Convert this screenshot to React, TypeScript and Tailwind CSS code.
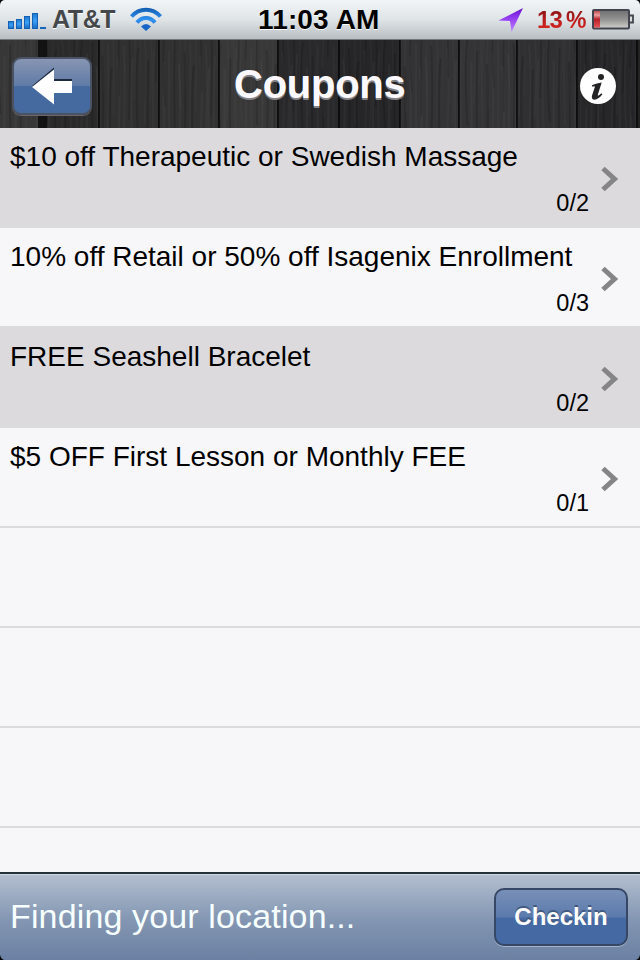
import React from "react";

const coupons = [
  { title: "$10 off Therapeutic or Swedish Massage", count: "0/2" },
  { title: "10% off Retail or 50% off Isagenix Enrollment", count: "0/3" },
  { title: "FREE Seashell Bracelet", count: "0/2" },
  { title: "$5 OFF First Lesson or Monthly FEE", count: "0/1" },
];

const planks = [
  { x: 0, w: 38, c: "#373737" },
  { x: 38, w: 61, c: "#2a2a2b" },
  { x: 99, w: 60, c: "#303031" },
  { x: 159, w: 60, c: "#313131" },
  { x: 219, w: 59, c: "#393839" },
  { x: 278, w: 61, c: "#29282a" },
  { x: 339, w: 61, c: "#262527" },
  { x: 400, w: 59, c: "#333234" },
  { x: 459, w: 58, c: "#343335" },
  { x: 517, w: 60, c: "#302f31" },
  { x: 577, w: 60, c: "#272628" },
  { x: 637, w: 3, c: "#222" },
];

function Wood() {
  const grain = Array.from({ length: 210 }, (_, i) => {
    const r = ((i * 7919 + 137) % 101) / 101;
    const x = i * 3.05 + r * 2;
    const y = r * 60 - 30;
    const bend = ((i * 31) % 9) - 4;
    return (
      <path
        key={i}
        d={`M${x} ${y} q${bend} 30 0 ${65 + r * 50}`}
        stroke={i % 3 === 0 ? "#000" : "#8b898b"}
        strokeOpacity={i % 3 === 0 ? 0.14 : 0.04 + r * 0.04}
        strokeWidth={1.4 + r}
        fill="none"
      />
    );
  });
  return (
    <svg className="absolute inset-0" width="640" height="88" viewBox="0 0 640 88">
      {planks.map((p) => (
        <rect key={p.x} x={p.x} width={p.w} height="88" fill={p.c} />
      ))}
      {grain}
      <rect x="38" width="9" height="88" fill="#0b0b0b" opacity=".75" />
      {planks.slice(2).map((p) => (
        <rect key={p.x} x={p.x - 1} width="1.8" height="88" fill="#080808" opacity=".85" />
      ))}
    </svg>
  );
}

function StatusBar() {
  return (
    <div className="relative h-10 shrink-0 bg-black">
      <div className="relative flex h-10 items-center rounded-t-[5px] border-b border-[#70787d] bg-linear-to-b from-[#f1f5f7] via-[#dfe4e7] to-[#b8bec2]">
        <svg className="ml-[7px] shrink-0" width="40" height="40" viewBox="7 0 40 40">
          <defs>
            <linearGradient id="sig" x1="0" y1="0" x2="0" y2="1">
              <stop offset="0" stopColor="#1b78d0" />
              <stop offset=".5" stopColor="#3ba0f5" />
              <stop offset="1" stopColor="#1769c4" />
            </linearGradient>
          </defs>
          <g fill="url(#sig)" stroke="#1461b3" strokeWidth="1">
            <rect x="8.5" y="21.500" width="5" height="7" />
            <rect x="16.500" y="19.500" width="5" height="9" />
            <rect x="24.500" y="16.500" width="5" height="12" />
            <rect x="32.500" y="13.500" width="5" height="15" />
          </g>
          <rect x="40" y="27" width="6" height="2" fill="#1668b9" />
        </svg>
        <span className="ml-[5px] w-[66px] text-[25px] leading-none font-bold tracking-[-0.4px] text-[#45484a] [text-shadow:0_1px_0_#fff]">
          AT&amp;T
        </span>
        <svg className="ml-[11px] shrink-0" width="34" height="40" viewBox="129 0 34 40">
          <defs>
            <linearGradient id="wf" x1="0" y1="8" x2="0" y2="31" gradientUnits="userSpaceOnUse">
              <stop offset="0" stopColor="#125cae" />
              <stop offset=".5" stopColor="#2f92f2" />
              <stop offset="1" stopColor="#1260c0" />
            </linearGradient>
          </defs>
          <g stroke="url(#wf)" fill="none" strokeWidth="4">
            <path d="M131.500 16.500 C139.500 7.500 152.500 7.500 160.500 16.500" />
            <path d="M137 22.500 C142 16.500 150 16.500 155 22.500" />
          </g>
          <path d="M146 31 L141 26.500 Q146 21.500 151 26.500Z" fill="#1765c6" />
        </svg>
        <span className="absolute left-[258px] top-[7px] whitespace-nowrap text-[28px] leading-[26px] font-bold tracking-[0.15px] text-black [text-shadow:0_1px_0_#fff]">
          11:03 AM
        </span>
        <div className="ml-auto flex items-center">
          <svg width="28" height="40" viewBox="497 0 28 40">
            <defs>
              <linearGradient id="loc" x1="0" y1="0" x2="0" y2="1">
                <stop offset="0" stopColor="#6a12d0" />
                <stop offset=".5" stopColor="#9a45f5" />
                <stop offset="1" stopColor="#c08bff" />
              </linearGradient>
            </defs>
            <path d="M523 8 L498.500 20.500 L510 21 L511.500 32Z" fill="url(#loc)" />
          </svg>
          <span className="ml-[12px] flex w-[50px] gap-[4px] bg-linear-to-b from-[#7d1212] via-[#b91c1c] to-[#e02a22] bg-clip-text text-[24px] leading-[26px] font-bold tracking-[-0.8px] text-transparent">
            <span>13</span>
            <span className="text-[23px]">%</span>
          </span>
          <svg className="ml-[4px] mr-[5px]" width="44" height="40" viewBox="591 0 44 40">
            <defs>
              <linearGradient id="bat" x1="0" y1="0" x2="0" y2="1">
                <stop offset="0" stopColor="#6f6f6f" />
                <stop offset=".5" stopColor="#929292" />
                <stop offset="1" stopColor="#d2d2ce" />
              </linearGradient>
              <linearGradient id="red" x1="0" y1="0" x2="0" y2="1">
                <stop offset="0" stopColor="#c64b4f" />
                <stop offset=".25" stopColor="#e9a0a2" />
                <stop offset=".5" stopColor="#b91f28" />
                <stop offset="1" stopColor="#e5555a" />
              </linearGradient>
            </defs>
            <rect x="593" y="10" width="36" height="18.500" rx="1" fill="url(#bat)" stroke="#42454f" strokeWidth="2" />
            <rect x="594" y="11" width="6" height="16.500" fill="url(#red)" />
            <path d="M630 15.500h3v7h-3" fill="#ddd" stroke="#42454f" strokeWidth="1.800" />
          </svg>
        </div>
      </div>
    </div>
  );
}

function Header() {
  return (
    <header className="relative h-[88px] shrink-0 overflow-hidden">
      <Wood />
      <div className="relative flex h-full items-start justify-between pl-[12px] pr-[24px]">
        <button className="mt-[17px] flex h-[58px] w-[80px] items-center justify-center rounded-[9px] border-2 border-[#4a5263] bg-linear-to-b from-[#8795b3] from-0% via-[#5f7ba6] via-50% to-[#456a9f] to-51% shadow-[0_1px_0_#686868]">
          <svg width="42" height="38" viewBox="31 67 42 38">
            <path d="M32 86 L54 67.500V79H72V91.500H54V104Z" fill="#1d2b42" />
            <path d="M32 87 L54 69.500V81H72V93H54V104.500Z" fill="#fff" />
          </svg>
        </button>
        <h1 className="absolute left-[234px] top-[22px] whitespace-nowrap text-[40px] leading-[44px] font-bold tracking-[-0.25px] text-[#fbf9fd] [text-shadow:0_2px_0_#858386]">
          Coupons
        </h1>
        <svg className="mt-[28px]" width="36" height="36" viewBox="0 0 36 36">
          <circle cx="18" cy="18" r="18" fill="#fff" />
          <circle cx="21" cy="9" r="3" fill="#242326" />
          <path
            d="M12 17.200 C15.500 15.600 18.500 14.800 21.700 14.400 L17.800 26.800 C17.500 28.200 18.600 27.900 21.300 25.200 L22.400 26.300 C19.400 30.200 16.700 31.900 14.200 31.700 C11.800 31.500 11.500 29.500 12.100 27.300 L14.700 19.400 C15.100 18 14.400 17.900 12.300 18.700Z"
            fill="#242326"
          />
        </svg>
      </div>
    </header>
  );
}

export default function App() {
  return (
    <div className="flex h-[960px] w-[640px] flex-col overflow-hidden bg-[#f7f6f9] font-['Liberation_Sans',Arial,sans-serif]">
      <StatusBar />
      <Header />
      <main className="h-[744px] shrink-0 overflow-hidden">
        {coupons.map((c, i) => (
          <div
            key={c.title}
            className={
              "flex h-[100px] border-b-2 border-[#dbdadc] " + (i % 2 ? "bg-[#f7f6f9]" : "bg-[#dcdadd]")
            }
          >
            <div className="flex w-[589px] flex-col pl-[10px]">
              <span className="mt-[13px] whitespace-nowrap text-[28px] leading-[32px] text-black">
                {c.title}
              </span>
              <span className="mt-[16px] self-end text-[23.500px] leading-[28px] text-black">{c.count}</span>
            </div>
            <svg className="ml-[12px] mt-[38px]" width="18" height="26" viewBox="0 0 18 26">
              <path d="M2 2.500 L13.500 13 L2 23.500" fill="none" stroke="#858487" strokeWidth="5" />
            </svg>
          </div>
        ))}
        {[0, 1, 2].map((i) => (
          <div key={i} className="h-[100px] border-b-2 border-[#dbdadc]" />
        ))}
      </main>
      <footer className="relative flex h-[88px] shrink-0 items-start justify-between border-t-2 border-[#26323a] bg-linear-to-b from-[#b4bfd0] from-0% via-[#8497b3] via-52% to-[#6b81a3] pl-[10px] pr-[12px] shadow-[inset_0_1px_0_#d0d9e0]">
        <span className="mt-[22px] whitespace-nowrap text-[34px] leading-[40px] tracking-[0.14px] text-[#f7ffff]">
          Finding your location...
        </span>
        <button className="mt-[14px] flex h-[58px] w-[134px] items-center justify-center rounded-[10px] border-2 border-[#374766] bg-linear-to-b from-[#7890b8] from-0% via-[#5b7aac] via-50% to-[#456aa3] to-52% text-[24px] font-bold text-white shadow-[0_1px_0_#a5b4c8] [text-shadow:0_-2px_0_#435a80]">
          Checkin
        </button>
        <svg className="absolute bottom-0 left-0" width="640" height="5" viewBox="0 0 640 5">
          <path d="M0 0 Q1 4 4 5H0ZM640 0 Q639 4 636 5H640Z" fill="#000" />
        </svg>
      </footer>
    </div>
  );
}
